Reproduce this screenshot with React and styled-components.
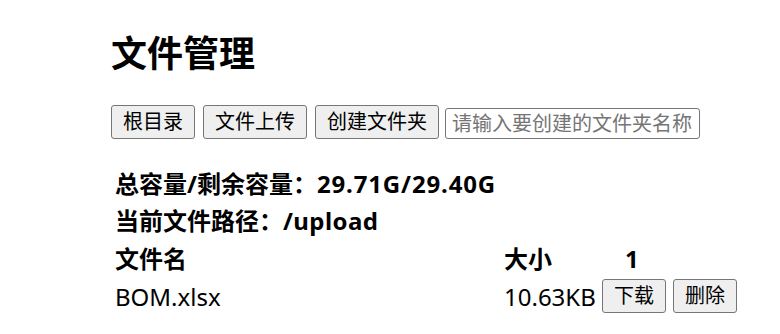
import React from "react";
import styled, { createGlobalStyle } from "styled-components";

const GlobalStyle = createGlobalStyle`
  body {
    margin: 0;
    background: #ffffff;
    color: #000000;
    font-family: "Noto Sans", "Noto Sans CJK SC", sans-serif;
  }
`;

const Page = styled.div`
  padding: 30px 0 0 111px;
`;

const Title = styled.h1`
  margin: 0;
  height: 48px;
  font-size: 36px;
  line-height: 48px;
  font-weight: 700;
`;

const Toolbar = styled.div`
  display: flex;
  align-items: flex-end;
  gap: 8px;
  margin-top: 27px;

  & > input {
    margin-left: -2px;
  }
`;

const Button = styled.button`
  height: 34px;
  padding: 0 11px;
  border: 1px solid #767676;
  border-radius: 3px;
  background: #efefef;
  color: #000000;
  font-family: inherit;
  font-size: 20px;
  line-height: 1;
  cursor: pointer;
`;

const NameInput = styled.input`
  box-sizing: border-box;
  width: 255px;
  height: 31px;
  padding: 0 6px;
  border: 1px solid #767676;
  border-radius: 3px;
  font-family: inherit;
  font-size: 20px;
  color: #000000;

  &::placeholder {
    color: #757575;
  }
`;

const Info = styled.div`
  margin-top: 26px;
  padding-left: 4px;
`;

const InfoLine = styled.div`
  height: 37px;
  font-size: 24px;
  line-height: 37px;
  font-weight: 700;
`;

const Value = styled.span`
  letter-spacing: ${(p) => p.$spacing || 0}px;
`;

const FileTable = styled.div`
  display: grid;
  grid-template-columns: 389px 98px auto;
  padding-left: 4px;
`;

const Cell = styled.div`
  display: flex;
  align-items: center;
  height: 38px;
  font-size: 24px;
  line-height: 37px;
  font-weight: ${(p) => (p.$head ? 700 : 400)};
  padding-left: ${(p) => p.$indent || 0}px;
  gap: 7px;
`;

const files = [{ name: "BOM.xlsx", size: "10.63KB" }];

export default function App() {
  return (
    <>
      <GlobalStyle />
      <Page>
        <Title>文件管理</Title>
        <Toolbar>
          <Button>根目录</Button>
          <Button>文件上传</Button>
          <Button>创建文件夹</Button>
          <NameInput placeholder="请输入要创建的文件夹名称" />
        </Toolbar>
        <Info>
          <InfoLine>
            总容量/剩余容量：<Value $spacing={0.85}>29.71G/29.40G</Value>
          </InfoLine>
          <InfoLine>
            当前文件路径：<Value $spacing={0.4}>/upload</Value>
          </InfoLine>
        </Info>
        <FileTable>
          <Cell $head>文件名</Cell>
          <Cell $head>大小</Cell>
          <Cell $head $indent={23}>1</Cell>
          {files.map((f) => (
            <React.Fragment key={f.name}>
              <Cell>{f.name}</Cell>
              <Cell>{f.size}</Cell>
              <Cell>
                <Button>下载</Button>
                <Button>删除</Button>
              </Cell>
            </React.Fragment>
          ))}
        </FileTable>
      </Page>
    </>
  );
}
